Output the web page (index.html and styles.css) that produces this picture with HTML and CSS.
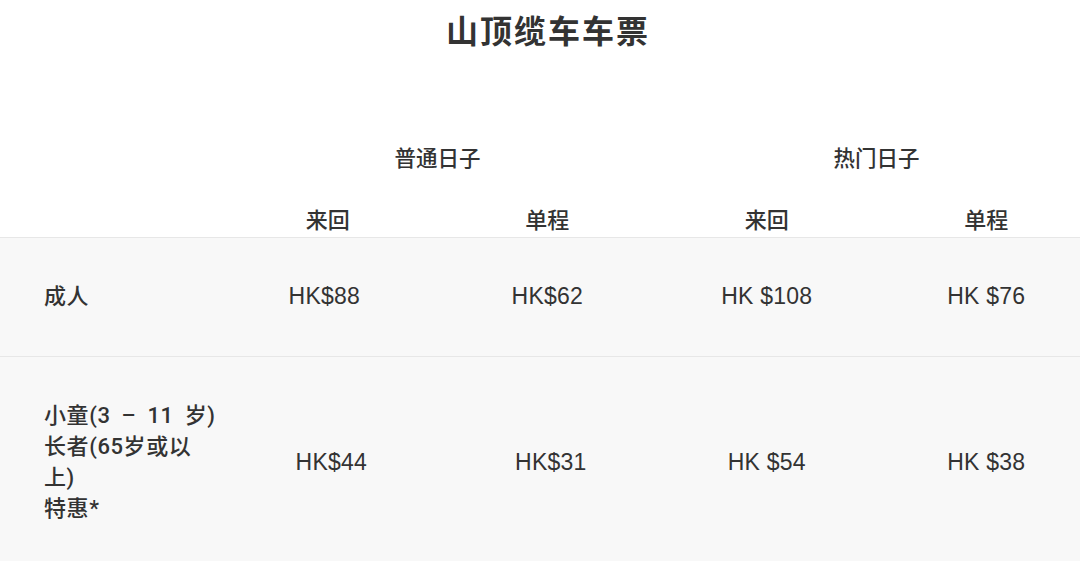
FILE: index.html
```html
<!DOCTYPE html>
<html lang="zh-CN">
<head>
<meta charset="utf-8">
<title>山顶缆车车票</title>
<link rel="stylesheet" href="styles.css">
</head>
<body>
<h1 class="title">山顶缆车车票</h1>
<table class="fares">
  <colgroup>
    <col class="col-label">
    <col class="col-price">
    <col class="col-price">
    <col class="col-price">
    <col class="col-price">
  </colgroup>
  <thead>
    <tr class="group-row">
      <th></th>
      <th colspan="2">普通日子</th>
      <th colspan="2">热门日子</th>
    </tr>
    <tr class="sub-row">
      <th></th>
      <th>来回</th>
      <th>单程</th>
      <th>来回</th>
      <th>单程</th>
    </tr>
  </thead>
  <tbody>
    <tr>
      <td class="label">成人</td>
      <td class="price shift-l">HK$88</td>
      <td class="price">HK$62</td>
      <td class="price">HK $108</td>
      <td class="price">HK $76</td>
    </tr>
    <tr>
      <td class="label">小童(3 – 11 岁)<br>长者(65岁或以<br>上)<br>特惠*</td>
      <td class="price shift-r">HK$44</td>
      <td class="price shift-r">HK$31</td>
      <td class="price">HK $54</td>
      <td class="price">HK $38</td>
    </tr>
  </tbody>
</table>
</body>
</html>
```

FILE: styles.css
```css
html, body {
  margin: 0;
  padding: 0;
  background: #ffffff;
  overflow: hidden;
}
body {
  width: 1080px;
  height: 561px;
  font-family: "Liberation Sans", "Noto Sans CJK SC", sans-serif;
  color: #333333;
}
.title {
  margin: 7px 0 0;
  padding-left: 16px;
  text-align: center;
  font-family: "Noto Sans CJK SC", sans-serif;
  font-size: 32px;
  line-height: 44px;
  font-weight: 700;
  color: #333333;
  letter-spacing: 2px;
}
.fares {
  margin-top: 90px;
  width: 1096px;
  border-collapse: collapse;
  table-layout: fixed;
}
.col-label { width: 218px; }
.col-price { width: 219.5px; }
.fares th {
  font-family: "Noto Sans CJK SC", sans-serif;
  font-size: 21.5px;
  line-height: 31px;
  font-weight: 500;
  text-align: center;
  padding: 0;
  color: #333333;
}
.sub-row th { font-size: 22px; }
.group-row th { padding-bottom: 31px; }
.sub-row th { padding-bottom: 3px; }
.fares tbody tr {
  background: #f8f8f8;
  border-top: 1px solid #e7e7e7;
}
.fares td {
  padding: 43px 0 44px;
  font-size: 22px;
  line-height: 31px;
  vertical-align: middle;
}
.label {
  padding-left: 44px !important;
  font-family: "Roboto", "Noto Sans CJK SC", sans-serif;
  font-weight: 500;
  text-align: left;
  white-space: nowrap;
  letter-spacing: 0.6px;
  word-spacing: 5px;
}
.price {
  text-align: center;
  font-size: 23px !important;
  letter-spacing: 0.2px;
}
.shift-l { padding-right: 7px !important; }
.shift-r { padding-left: 7px !important; }
```
